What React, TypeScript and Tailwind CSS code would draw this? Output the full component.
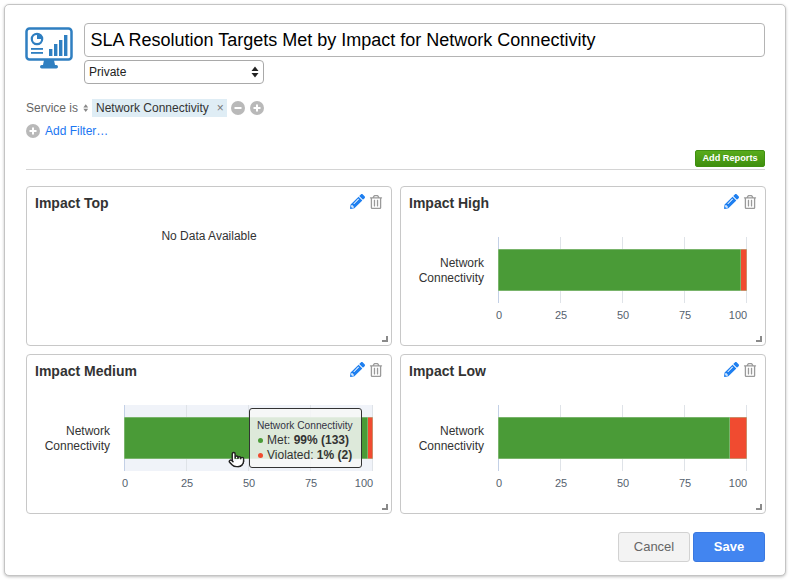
import React from 'react';
import { FaPencilAlt, FaRegTrashAlt } from 'react-icons/fa';
import { LuPointer } from 'react-icons/lu';

const ticks = [
  { x: 97.5, text: 98, label: '0' },
  { x: 159.5, text: 160, label: '25' },
  { x: 221.5, text: 222, label: '50' },
  { x: 283.5, text: 284, label: '75' },
  { x: 345.5, text: 337, label: '100' },
];

const MonitorIcon = () => (
  <svg width="50" height="44" viewBox="0 0 50 44" className="shrink-0">
    <rect x="1.5" y="1.5" width="45" height="31" rx="3" fill="#fff" stroke="#2f7fc1" strokeWidth="2.5" />
    <path d="M19 33h10l1 5h-12z" fill="#2f7fc1" />
    <rect x="15" y="38" width="18" height="3.5" rx="1.7" fill="#2f7fc1" />
    <circle cx="12" cy="12" r="5.2" fill="#fff" stroke="#2f7fc1" strokeWidth="2.2" />
    <path d="M12 12V6.6a5.4 5.4 0 0 1 5.4 5.4z" fill="#2f7fc1" />
    <rect x="6" y="21" width="12" height="1.8" fill="#2f7fc1" />
    <rect x="6" y="25" width="12" height="1.8" fill="#2f7fc1" />
    <rect x="24" y="22" width="3.4" height="7" fill="#2f7fc1" />
    <rect x="29" y="17" width="3.4" height="12" fill="#2f7fc1" />
    <rect x="34" y="13" width="3.4" height="16" fill="#2f7fc1" />
    <rect x="39" y="8" width="3.4" height="21" fill="#2f7fc1" />
  </svg>
);

const Round = ({ sign }: { sign: '+' | '-' }) => (
  <span className="flex h-[14px] w-[14px] items-center justify-center rounded-full bg-[#b9b9b9]">
    <svg width="8" height="8" viewBox="0 0 8 8">
      <rect x="0.5" y="3" width="7" height="2" fill="#fff" />
      {sign === '+' && <rect x="3" y="0.5" width="2" height="7" fill="#fff" />}
    </svg>
  </span>
);

const UpDown = ({ size }: { size: number }) => (
  <svg width={size} height={size * 1.5} viewBox="0 0 8 12">
    <path d="M4 0.5L7.5 5h-7zM4 11.5L0.5 7h7z" fill="currentColor" />
  </svg>
);

const Chart = ({ green, hover }: { green: number; hover?: boolean }) => (
  <svg width="364" height="100" viewBox="0 0 364 100" className="block">
    {hover && <rect x="97" y="10" width="249" height="66" fill="#f0f3f9" />}
    {ticks.map((t, i) => (
      <line key={t.x} x1={t.x} x2={t.x} y1="10" y2="76" stroke={i === 0 ? '#c3d0e6' : '#dfe3e8'} />
    ))}
    <rect x="97" y="22" width="249" height="42" fill="#a9cda1" />
    <rect x="97.5" y="22.5" width={green} height="41" fill="#4a9b37" />
    <rect x={97.5 + green + 0.5} y="22.5" width={248 - green - 0.5} height="41" fill="#f04b30" />
    <text x="83" y="40" textAnchor="end" fontSize="12" fill="#333">Network</text>
    <text x="83" y="55" textAnchor="end" fontSize="12" fill="#333">Connectivity</text>
    {ticks.map((t) => (
      <text key={t.label} x={t.text} y="92" textAnchor="middle" fontSize="11" fill="#56626e">
        {t.label}
      </text>
    ))}
  </svg>
);

const Card = ({ title, children }: { title: string; children?: React.ReactNode }) => (
  <div className="relative h-[160px] w-[366px] rounded-[4px] border border-[#c8c8c8] bg-white">
    <div className="flex h-[40px] items-start justify-between pl-2 pr-[8px] pt-[7px]">
      <span className="text-[14px] font-bold leading-[18px] text-[#333]">{title}</span>
      <span className="flex items-center gap-[4px]">
        <FaPencilAlt className="text-[15px] text-[#1e7ff0]" />
        <FaRegTrashAlt className="text-[14px] text-[#9a9a9a]" />
      </span>
    </div>
    {children}
    <span className="absolute bottom-[3px] right-[3px] h-[6px] w-[6px] border-b-2 border-r-2 border-[#8a8a8a]" />
  </div>
);

export default function App() {
  return (
    <div className="h-[580px] w-[790px] bg-white p-[4px] font-['Liberation_Sans',Arial,sans-serif]">
      <div className="h-[572px] w-[782px] rounded-[5px] border border-[#c4c4c4] bg-white pl-[21px] pr-[20px] pt-[18px] shadow-[0_1px_3px_rgba(0,0,0,0.25)]">
        <div className="flex gap-[10px]">
          <div className="-ml-[1px] pt-[4px]">
            <MonitorIcon />
          </div>
          <div className="-ml-[1px] flex flex-1 flex-col gap-[3px]">
            <div className="flex h-[34px] items-center rounded-[4px] border border-[#b4b4b4] px-[5.5px] text-[18px] text-black">
              SLA Resolution Targets Met by Impact for Network Connectivity
            </div>
            <div className="flex h-[24px] w-[180px] items-center justify-between rounded-[4px] border border-[#a9a9a9] pl-[4px] pr-[4px] text-[12px] text-[#222]">
              Private
              <UpDown size={8} />
            </div>
          </div>
        </div>

        <div className="mt-[15px] flex h-[18px] items-center text-[12px]">
          <span className="text-[#666]">Service is</span>
          <span className="ml-[5px] mr-[3.5px] text-[#888]"><UpDown size={5.5} /></span>
          <span className="flex h-[18px] items-center bg-[#dfedf5] pl-[4px] pr-[3px] text-[#333]">
            Network Connectivity
            <span className="ml-[8px] text-[12px] leading-none text-[#777]">×</span>
          </span>
          <span className="ml-[4px] flex gap-[5px]">
            <Round sign="-" />
            <Round sign="+" />
          </span>
        </div>
        <div className="mt-[5px] flex h-[18px] items-center gap-[5px] text-[12px] text-[#1b76f2]">
          <Round sign="+" />
          Add Filter…
        </div>

        <div className="mt-[10px] flex justify-end">
          <button className="h-[17px] w-[70px] rounded-[2px] border border-[#3f8f10] bg-[linear-gradient(#58ab1c,#3f8f0e)] text-[9.2px] font-bold leading-none text-white">
            Add Reports
          </button>
        </div>
        <div className="mt-[2px] border-t border-[#d4d4d4]" />

        <div className="mt-[16px] grid w-[740px] grid-cols-[366px_366px] gap-x-[8px] gap-y-[8px]">
          <Card title="Impact Top">
            <p className="text-center text-[12px] text-[#333]">No Data Available</p>
          </Card>
          <Card title="Impact High">
            <Chart green={242} />
          </Card>
          <Card title="Impact Medium">
            <Chart green={243} hover />
            <div className="absolute left-[222px] top-[53px] h-[60px] w-[113px] rounded-[3px] border border-[#333] bg-[rgba(247,247,247,0.85)] pl-[7px] pt-[9px] text-[12px] leading-[15px] text-[#333]">
              <div className="whitespace-nowrap text-[10.2px] text-[#334]">Network Connectivity</div>
              <div className="flex items-center whitespace-nowrap">
                <span className="ml-[1px] mr-[4px] h-[5px] w-[5px] rounded-full bg-[#4a9b37]" />
                <span>Met: <b>99% (133)</b></span>
              </div>
              <div className="flex items-center whitespace-nowrap">
                <span className="ml-[1px] mr-[4px] h-[5px] w-[5px] rounded-full bg-[#f04b30]" />
                <span>Violated: <b>1% (2)</b></span>
              </div>
            </div>
            <LuPointer className="absolute left-[201px] top-[96px] text-[17px] fill-white text-[#222]" />
          </Card>
          <Card title="Impact Low">
            <Chart green={231} />
          </Card>
        </div>

        <div className="mt-[18px] flex justify-end gap-[3px]">
          <button className="h-[30px] w-[72px] rounded-[3px] border border-[#d2d2d2] bg-[#f3f3f3] text-[13px] text-[#666]">
            Cancel
          </button>
          <button className="h-[30px] w-[72px] rounded-[3px] border border-[#3a78e0] bg-[#4285f0] text-[13px] font-bold text-white">
            Save
          </button>
        </div>
      </div>
    </div>
  );
}
